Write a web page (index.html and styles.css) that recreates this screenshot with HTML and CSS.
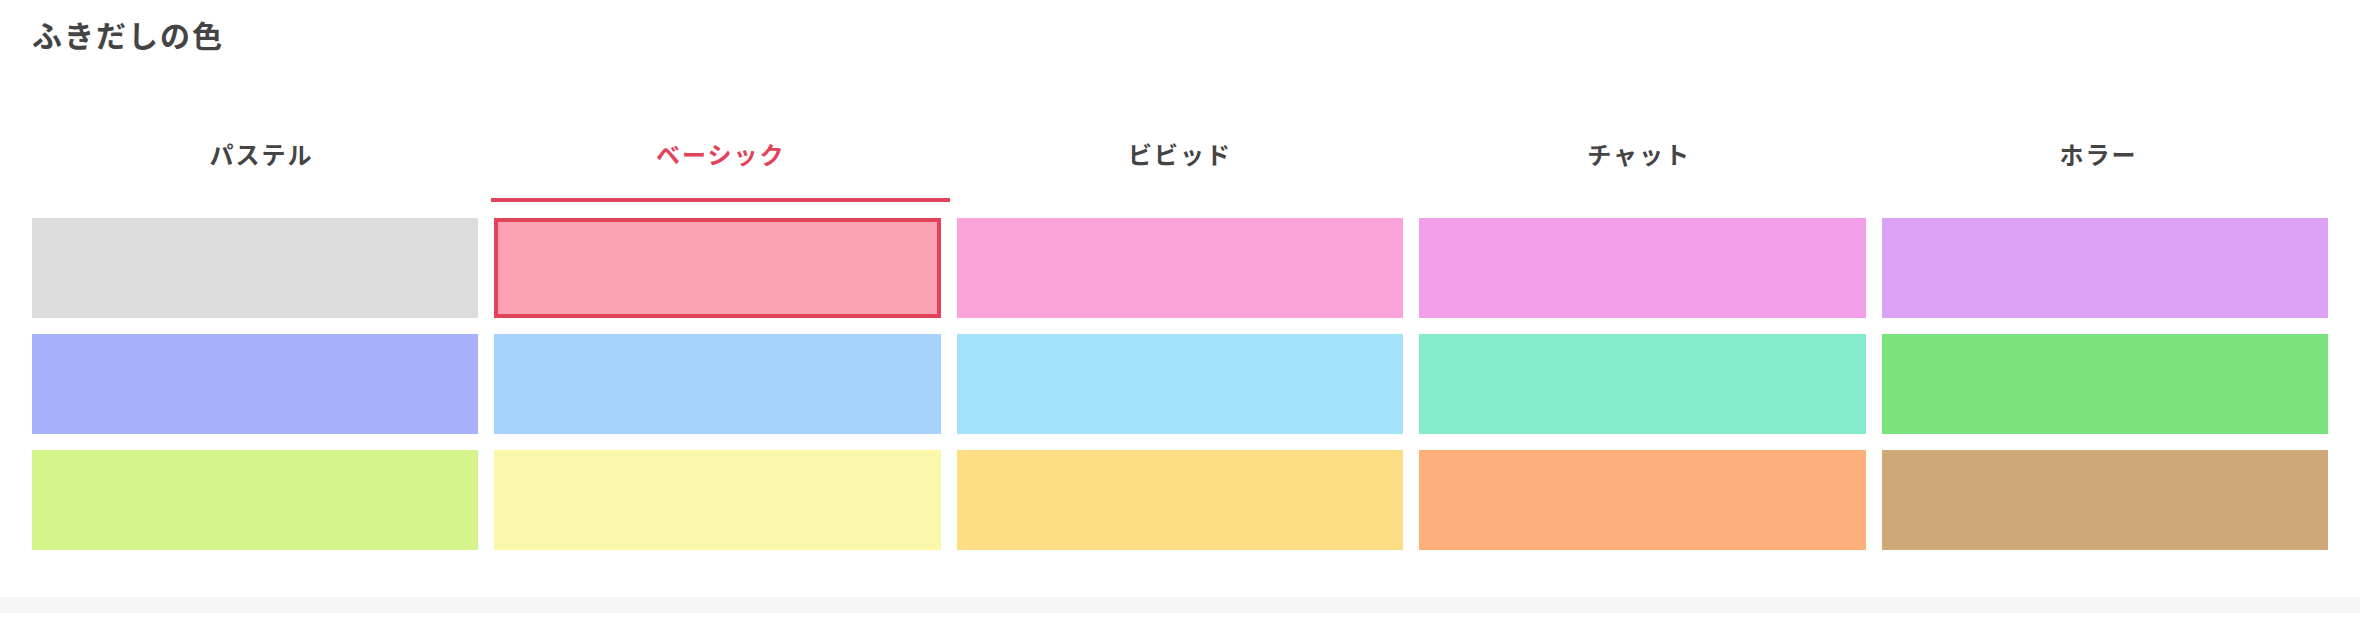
FILE: index.html
```html
<!DOCTYPE html>
<html lang="ja">
<head>
    <meta charset="UTF-8">
    <meta name="viewport" content="width=device-width, initial-scale=1.0">
    <title>ふきだしの色</title>
    <link rel="stylesheet" href="styles.css">
</head>
<body>
    <section class="panel">
        <h2 class="panel-title">ふきだしの色</h2>
        <div class="tabs">
            <div class="tab">パステル</div>
            <div class="tab active">ベーシック</div>
            <div class="tab">ビビッド</div>
            <div class="tab">チャット</div>
            <div class="tab">ホラー</div>
        </div>
        <div class="swatches">
            <div class="swatch c-gray"></div>
            <div class="swatch c-pink selected"></div>
            <div class="swatch c-rose"></div>
            <div class="swatch c-orchid"></div>
            <div class="swatch c-lavender"></div>
            <div class="swatch c-periwinkle"></div>
            <div class="swatch c-blue"></div>
            <div class="swatch c-sky"></div>
            <div class="swatch c-mint"></div>
            <div class="swatch c-green"></div>
            <div class="swatch c-lime"></div>
            <div class="swatch c-cream"></div>
            <div class="swatch c-yellow"></div>
            <div class="swatch c-orange"></div>
            <div class="swatch c-tan"></div>
        </div>
    </section>
    <div class="divider"></div>
    <section class="panel panel-next"></section>
</body>
</html>
```

FILE: styles.css
```css
body {
    margin: 0;
    font-family: "Noto Sans CJK JP", "Noto Sans", sans-serif;
    color: #444;
    background: #fff;
}
.panel {
    padding: 14px 32px 47px;
    background: #fff;
}
.panel-next {
    padding: 0;
    height: 40px;
}
.panel-title {
    margin: 0;
    font-size: 30px;
    line-height: 40px;
    font-weight: bold;
    letter-spacing: 2px;
}
.tabs {
    display: grid;
    grid-template-columns: repeat(5, 1fr);
    margin-top: 64px;
}
.tab {
    padding: 20px 0 28px;
    font-size: 24px;
    line-height: 32px;
    font-weight: bold;
    letter-spacing: 2px;
    text-align: center;
    border-bottom: 4px solid transparent;
    cursor: pointer;
}
.tab.active {
    color: #e0435a;
    border-bottom-color: #e0435a;
}
.swatches {
    display: grid;
    grid-template-columns: repeat(5, 1fr);
    gap: 16px;
    margin-top: 16px;
}
.swatch {
    height: 100px;
    box-sizing: border-box;
    cursor: pointer;
}
.swatch.selected {
    border: 4px solid #e0435a;
}
.divider {
    height: 16px;
    background: #f5f5f5;
}
.c-gray { background: #dcdcdc; }
.c-pink { background: #fda2b2; }
.c-rose { background: #fca3dc; }
.c-orchid { background: #f19fe9; }
.c-lavender { background: #dba2f5; }
.c-periwinkle { background: #a8b1fd; }
.c-blue { background: #a6d3fb; }
.c-sky { background: #a3e2f9; }
.c-mint { background: #86eacc; }
.c-green { background: #7ae37e; }
.c-lime { background: #d4f38a; }
.c-cream { background: #fbf8aa; }
.c-yellow { background: #fdde84; }
.c-orange { background: #ffb07a; }
.c-tan { background: #cfa879; }
```
